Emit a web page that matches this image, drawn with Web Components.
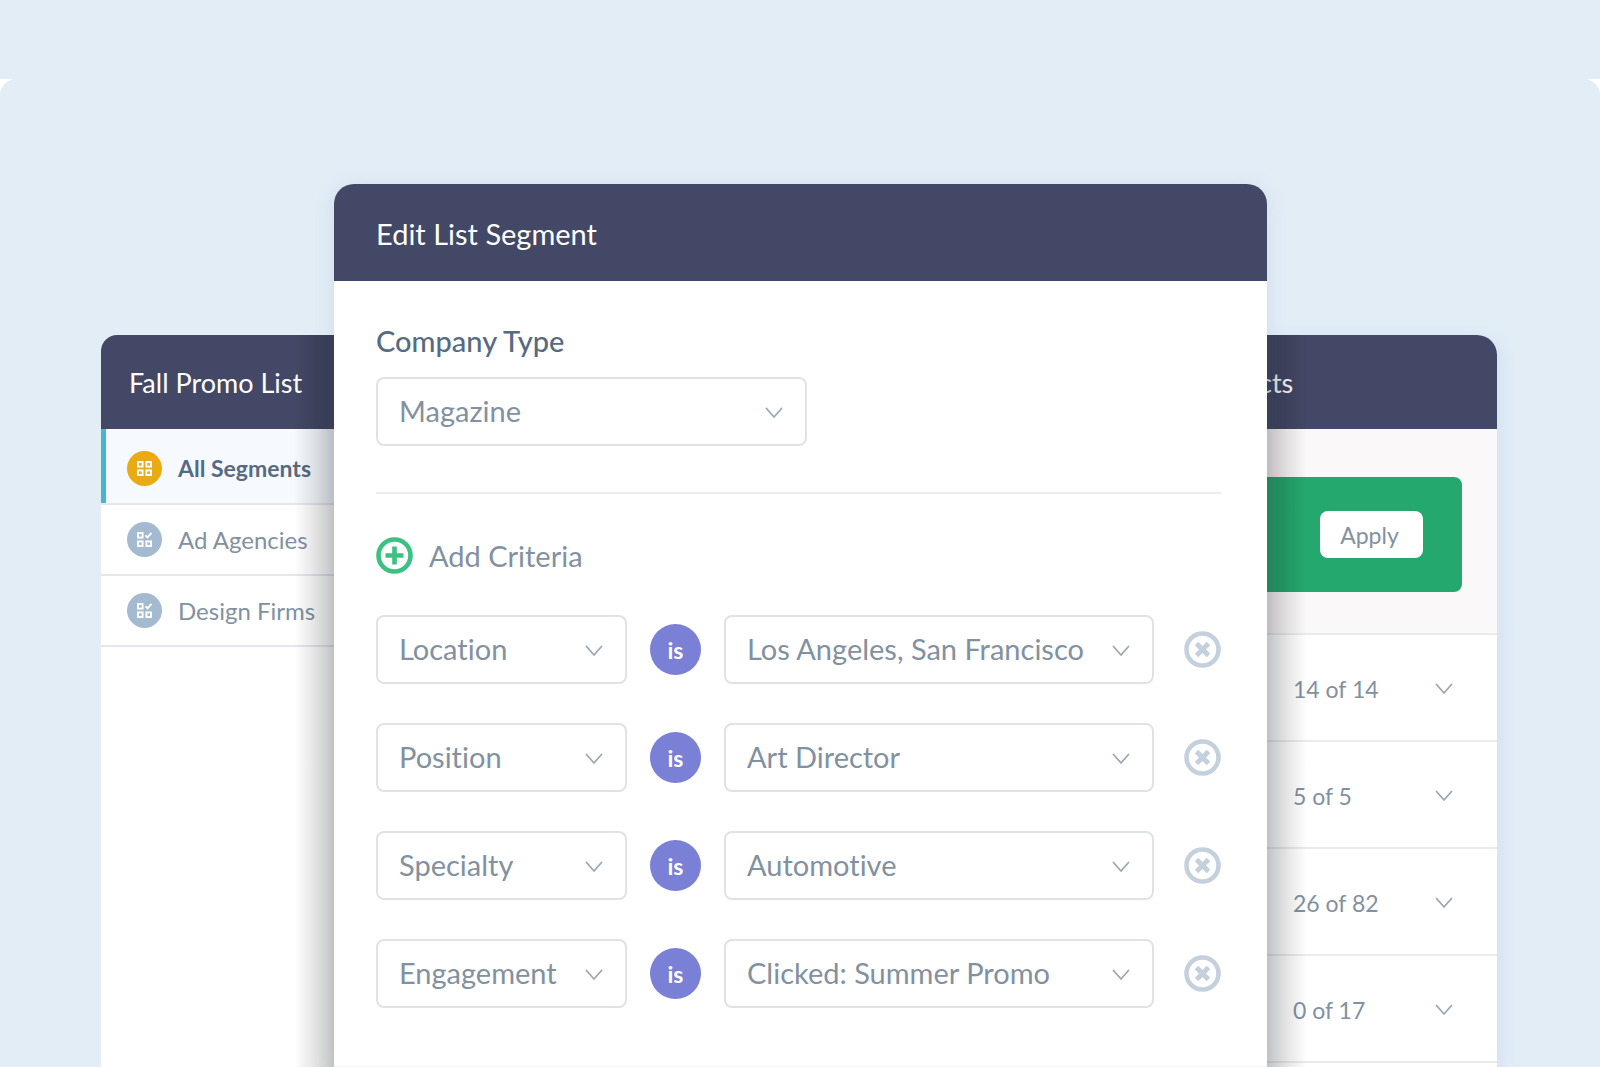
<!DOCTYPE html>
<html lang="en">
<head>
<meta charset="utf-8">
<meta name="viewport" content="width=device-width, initial-scale=1">
<title>Edit List Segment</title>
<style>
  * { box-sizing: border-box; }

  body {
    margin: 0;
    background: #e2edf6;
    font-family: Lato, "Open Sans", sans-serif;
    font-variant-ligatures: none;
    color: #82919f;
    overflow: hidden;
  }
</style>
</head>
<body>
<segment-stage>
  <app-panel slot="list" heading="Fall Promo List" side="left">
    <nav aria-label="Segments">
      <segment-link label="All Segments" active></segment-link>
      <segment-link label="Ad Agencies"></segment-link>
      <segment-link label="Design Firms"></segment-link>
    </nav>
  </app-panel>

  <app-panel slot="editor" heading="Edit List Segment" side="main">
    <segment-editor>
      <select-box slot="company" label="Company Type" value="Magazine" show-label></select-box>
      <criteria-row field="Location" value="Los Angeles, San Francisco"></criteria-row>
      <criteria-row field="Position" value="Art Director"></criteria-row>
      <criteria-row field="Specialty" value="Automotive"></criteria-row>
      <criteria-row field="Engagement" value="Clicked: Summer Promo"></criteria-row>
    </segment-editor>
  </app-panel>

  <app-panel slot="results" heading="cts" side="right">
    <apply-banner></apply-banner>
    <result-row>14 of 14</result-row>
    <result-row>5 of 5</result-row>
    <result-row>26 of 82</result-row>
    <result-row>0 of 17</result-row>
  </app-panel>
</segment-stage>

<script>
const BASE = `
  *, *::before, *::after { box-sizing: border-box; }
  button, select {
    font: inherit;
    font-variant-ligatures: none;
    color: inherit;
  }
  button { border: 0; padding: 0; background: none; cursor: pointer; }
  button:focus-visible, select:focus-visible, a:focus-visible {
    outline: 3px solid #7b80d6;
    outline-offset: 2px;
  }
  svg { display: block; flex-shrink: 0; }
`;

const CHEVRON = `
  <svg class="chevron" width="18" height="12" viewBox="0 0 18 12" fill="none" stroke="#9ca8b4"
       stroke-width="1.8" stroke-linecap="round" stroke-linejoin="round" aria-hidden="true">
    <path d="M1.500 1.500l7.500 8.500 7.500-8.500"/>
  </svg>`;

// Page backdrop and the three panel columns
class SegmentStage extends HTMLElement {
  constructor() {
    super();
    this.attachShadow({ mode: 'open' });
  }

  connectedCallback() {
    this.shadowRoot.innerHTML = `
      <style>
        ${BASE}
        :host {
          display: flex;
          flex-direction: column;
          height: 100vh;
          padding-top: 79px;
        }
        .backdrop {
          flex: 1;
          min-height: 0;
          background: #fff;
        }
        main {
          display: grid;
          grid-template-columns: 233fr 933fr 230fr;
          height: 100%;
          padding: 0 103px 0 101px;
          background: #e2edf6;
          border-radius: 16px 16px 0 0;
        }
        ::slotted(*) { margin-top: 256px; min-width: 0; }
        ::slotted([slot="editor"]) { margin-top: 105px; z-index: 1; }
      </style>
      <div class="backdrop">
        <main>
          <slot name="list"></slot>
          <slot name="editor"></slot>
          <slot name="results"></slot>
        </main>
      </div>`;
  }
}

// White card with a dark title bar
class AppPanel extends HTMLElement {
  constructor() {
    super();
    this.attachShadow({ mode: 'open' });
  }

  connectedCallback() {
    this.shadowRoot.innerHTML = `
      <style>
        ${BASE}
        :host {
          display: block;
          position: relative;
          background: #fff;
        }
        header {
          display: flex;
          align-items: center;
          height: 94px;
          padding: 2px 28px 0;
          background: #434866;
          color: #fff;
        }
        h2 {
          margin: 0;
          font-size: 27px;
          line-height: 36px;
          font-weight: 400;
          white-space: nowrap;
        }
        :host([side="left"]), :host([side="left"]) header { border-radius: 16px 0 0 0; }
        :host([side="right"]), :host([side="right"]) header { border-radius: 0 20px 0 0; }
        :host([side="right"]) { box-shadow: 4px 4px 16px rgba(120, 150, 210, 0.14); }
        :host([side="right"]) header { padding-left: 0; overflow: hidden; }
        :host([side="right"]) h2 { margin-left: -8px; }
        :host([side="main"]) {
          border-radius: 20px 20px 0 0;
          box-shadow: 0 4px 20px rgba(120, 145, 190, 0.18);
        }
        :host([side="main"]) header {
          height: 97px;
          padding: 2px 42px 0;
          border-radius: 20px 20px 0 0;
        }
        :host([side="main"]) h2 { font-size: 29px; }

        /* shade the main panel throws on its neighbours */
        .shade {
          display: none;
          position: absolute;
          top: 0;
          bottom: 0;
          width: 40px;
          pointer-events: none;
        }
        :host([side="left"]) .shade {
          display: block;
          right: 0;
          background: linear-gradient(to left, rgba(0, 0, 0, 0.22), rgba(0, 0, 0, 0.1) 50%, transparent);
        }
        :host([side="right"]) .shade {
          display: block;
          left: 0;
          background: linear-gradient(to right, rgba(0, 0, 0, 0.22), rgba(0, 0, 0, 0.1) 50%, transparent);
        }
      </style>
      <header><h2></h2></header>
      <slot></slot>
      <div class="shade"></div>`;
    this.shadowRoot.querySelector('h2').textContent = this.getAttribute('heading');
  }
}

class SegmentLink extends HTMLElement {
  constructor() {
    super();
    this.attachShadow({ mode: 'open' });
  }

  connectedCallback() {
    const active = this.hasAttribute('active');
    const corner = active
      ? '<rect x="9.4" y="1" width="4.600" height="4.600"/>'
      : '<path d="M8.500 3.400l2 2 4-4.400"/>';

    this.shadowRoot.innerHTML = `
      <style>
        ${BASE}
        :host { display: block; }
        a {
          display: flex;
          align-items: center;
          gap: 16px;
          height: 71px;
          padding-left: 26px;
          border-bottom: 2px solid #e3e8ef;
          color: inherit;
          text-decoration: none;
          font-size: 24px;
          line-height: 32px;
          white-space: nowrap;
        }
        .icon {
          display: flex;
          align-items: center;
          justify-content: center;
          flex-shrink: 0;
          width: 35px;
          height: 35px;
          border-radius: 50%;
          background: #a4bad0;
        }
        a.active {
          height: 76px;
          padding: 4px 0 0 26px;
          background: linear-gradient(to right, #45b6d6 5px, #f6fafe 5px);
          color: #566b82;
          font-size: 23px;
          font-weight: 700;
        }
        a.active .icon { background: #eaaa14; }
      </style>
      <a href="#" class="${active ? 'active' : ''}">
        <span class="icon">
          <svg width="15" height="15" viewBox="0 0 15 15" fill="none" stroke="#fff" stroke-width="1.9" aria-hidden="true">
            <rect x="1" y="1" width="4.600" height="4.600"/>
            ${corner}
            <rect x="1" y="9.400" width="4.600" height="4.600"/>
            <rect x="9.400" y="9.400" width="4.600" height="4.600"/>
          </svg>
        </span>
        <span class="label"></span>
      </a>`;
    this.shadowRoot.querySelector('.label').textContent = this.getAttribute('label');
    if (active) this.shadowRoot.querySelector('a').setAttribute('aria-current', 'page');
  }
}

// Native select with its own frame and chevron
class SelectBox extends HTMLElement {
  constructor() {
    super();
    this.attachShadow({ mode: 'open' });
  }

  connectedCallback() {
    const label = this.getAttribute('label');
    const showLabel = this.hasAttribute('show-label');

    this.shadowRoot.innerHTML = `
      <style>
        ${BASE}
        :host { display: block; min-width: 0; }
        label {
          display: block;
          margin-bottom: 18px;
          color: #566b82;
          font-size: 29px;
          line-height: 36px;
          font-weight: 500;
        }
        .field { display: grid; align-items: center; }
        select, .chevron { grid-area: 1 / 1; }
        select {
          appearance: none;
          width: 100%;
          height: 69px;
          padding: 0 44px 2px 21px;
          border: 2px solid #e0e2e7;
          border-radius: 8px;
          background: #fff;
          font-size: 29px;
          cursor: pointer;
        }
        .chevron {
          justify-self: end;
          margin: 2px 24px 0 0;
          pointer-events: none;
        }
      </style>
      ${showLabel ? '<label for="control"></label>' : ''}
      <div class="field">
        <select id="control"><option></option></select>
        ${CHEVRON}
      </div>`;

    this.shadowRoot.querySelector('option').textContent = this.getAttribute('value');
    if (showLabel) {
      this.shadowRoot.querySelector('label').textContent = label;
    } else {
      this.shadowRoot.querySelector('select').setAttribute('aria-label', label);
    }
  }
}

class CriteriaRow extends HTMLElement {
  constructor() {
    super();
    this.attachShadow({ mode: 'open' });
  }

  connectedCallback() {
    const field = this.getAttribute('field');
    const value = this.getAttribute('value');

    this.shadowRoot.innerHTML = `
      <style>
        ${BASE}
        :host {
          display: grid;
          grid-template-columns: minmax(0, 251fr) 51px minmax(0, 430fr) 44px;
          gap: 23px;
          align-items: center;
        }
        .operator {
          width: 51px;
          height: 51px;
          border-radius: 50%;
          background: #7a80d6;
          color: #fff;
          font-size: 23px;
          line-height: 53px;
          font-weight: 700;
          text-align: center;
        }
        .remove { justify-self: end; border-radius: 50%; }
      </style>
      <select-box label="Field" value="${field}"></select-box>
      <span class="operator">is</span>
      <select-box label="${field} value" value="${value}"></select-box>
      <button class="remove" type="button" aria-label="Remove ${field}">
        <svg width="37" height="37" viewBox="0 0 37 37" fill="none" stroke="#c4d1dd" aria-hidden="true">
          <circle cx="18.5" cy="18.5" r="16" stroke-width="4.6"/>
          <path d="M12.5 12.5l12 12M24.5 12.5l-12 12" stroke-width="5"/>
        </svg>
      </button>`;

    this.shadowRoot.querySelector('.remove').addEventListener('click', () => this.remove());
  }
}

class SegmentEditor extends HTMLElement {
  constructor() {
    super();
    this.attachShadow({ mode: 'open' });
  }

  connectedCallback() {
    this.shadowRoot.innerHTML = `
      <style>
        ${BASE}
        :host { display: block; }
        form {
          padding: 42px 46px 58px 42px;
          border-bottom: 2px solid #f4f4f6;
        }
        .company { width: 51%; }
        hr {
          height: 2px;
          margin: 46px 0 43px;
          border: 0;
          background: #ededf0;
        }
        .add {
          display: flex;
          align-items: center;
          gap: 16px;
          height: 36px;
          font-size: 29px;
        }
        .rows {
          display: flex;
          flex-direction: column;
          gap: 39px;
          margin-top: 42px;
        }
      </style>
      <form>
        <div class="company"><slot name="company"></slot></div>
        <hr>
        <button class="add" type="button">
          <svg width="37" height="37" viewBox="0 0 37 37" fill="none" stroke="#3dc083" aria-hidden="true">
            <circle cx="18.5" cy="18.5" r="16" stroke-width="4.6"/>
            <path d="M18.5 9.5v18M9.5 18.5h18" stroke-width="4.6"/>
          </svg>
          Add Criteria
        </button>
        <div class="rows"><slot></slot></div>
      </form>`;
  }
}

class ApplyBanner extends HTMLElement {
  constructor() {
    super();
    this.attachShadow({ mode: 'open' });
  }

  connectedCallback() {
    this.shadowRoot.innerHTML = `
      <style>
        ${BASE}
        :host {
          display: block;
          padding: 48px 35px 41px 0;
          background: #fbf8f9;
          border-bottom: 2px solid #ebebeb;
        }
        .banner {
          display: flex;
          align-items: center;
          justify-content: flex-end;
          height: 115px;
          padding-right: 39px;
          border-radius: 0 8px 8px 0;
          background: #25a86e;
        }
        button {
          width: 103px;
          height: 47px;
          padding-right: 4px;
          border-radius: 8px;
          background: #fff;
          font-size: 23px;
        }
      </style>
      <div class="banner"><button type="button">Apply</button></div>`;
  }
}

class ResultRow extends HTMLElement {
  constructor() {
    super();
    this.attachShadow({ mode: 'open' });
  }

  connectedCallback() {
    this.shadowRoot.innerHTML = `
      <style>
        ${BASE}
        :host {
          display: flex;
          align-items: center;
          justify-content: space-between;
          height: 107px;
          padding: 2px 44px 0 26px;
          border-bottom: 2px solid #ebebeb;
          font-size: 23px;
          line-height: 32px;
        }
      </style>
      <span><slot></slot></span>
      <button type="button" aria-label="Show details">${CHEVRON}</button>`;
  }
}

customElements.define('segment-stage', SegmentStage);
customElements.define('app-panel', AppPanel);
customElements.define('segment-link', SegmentLink);
customElements.define('select-box', SelectBox);
customElements.define('criteria-row', CriteriaRow);
customElements.define('segment-editor', SegmentEditor);
customElements.define('apply-banner', ApplyBanner);
customElements.define('result-row', ResultRow);
</script>
</body>
</html>
